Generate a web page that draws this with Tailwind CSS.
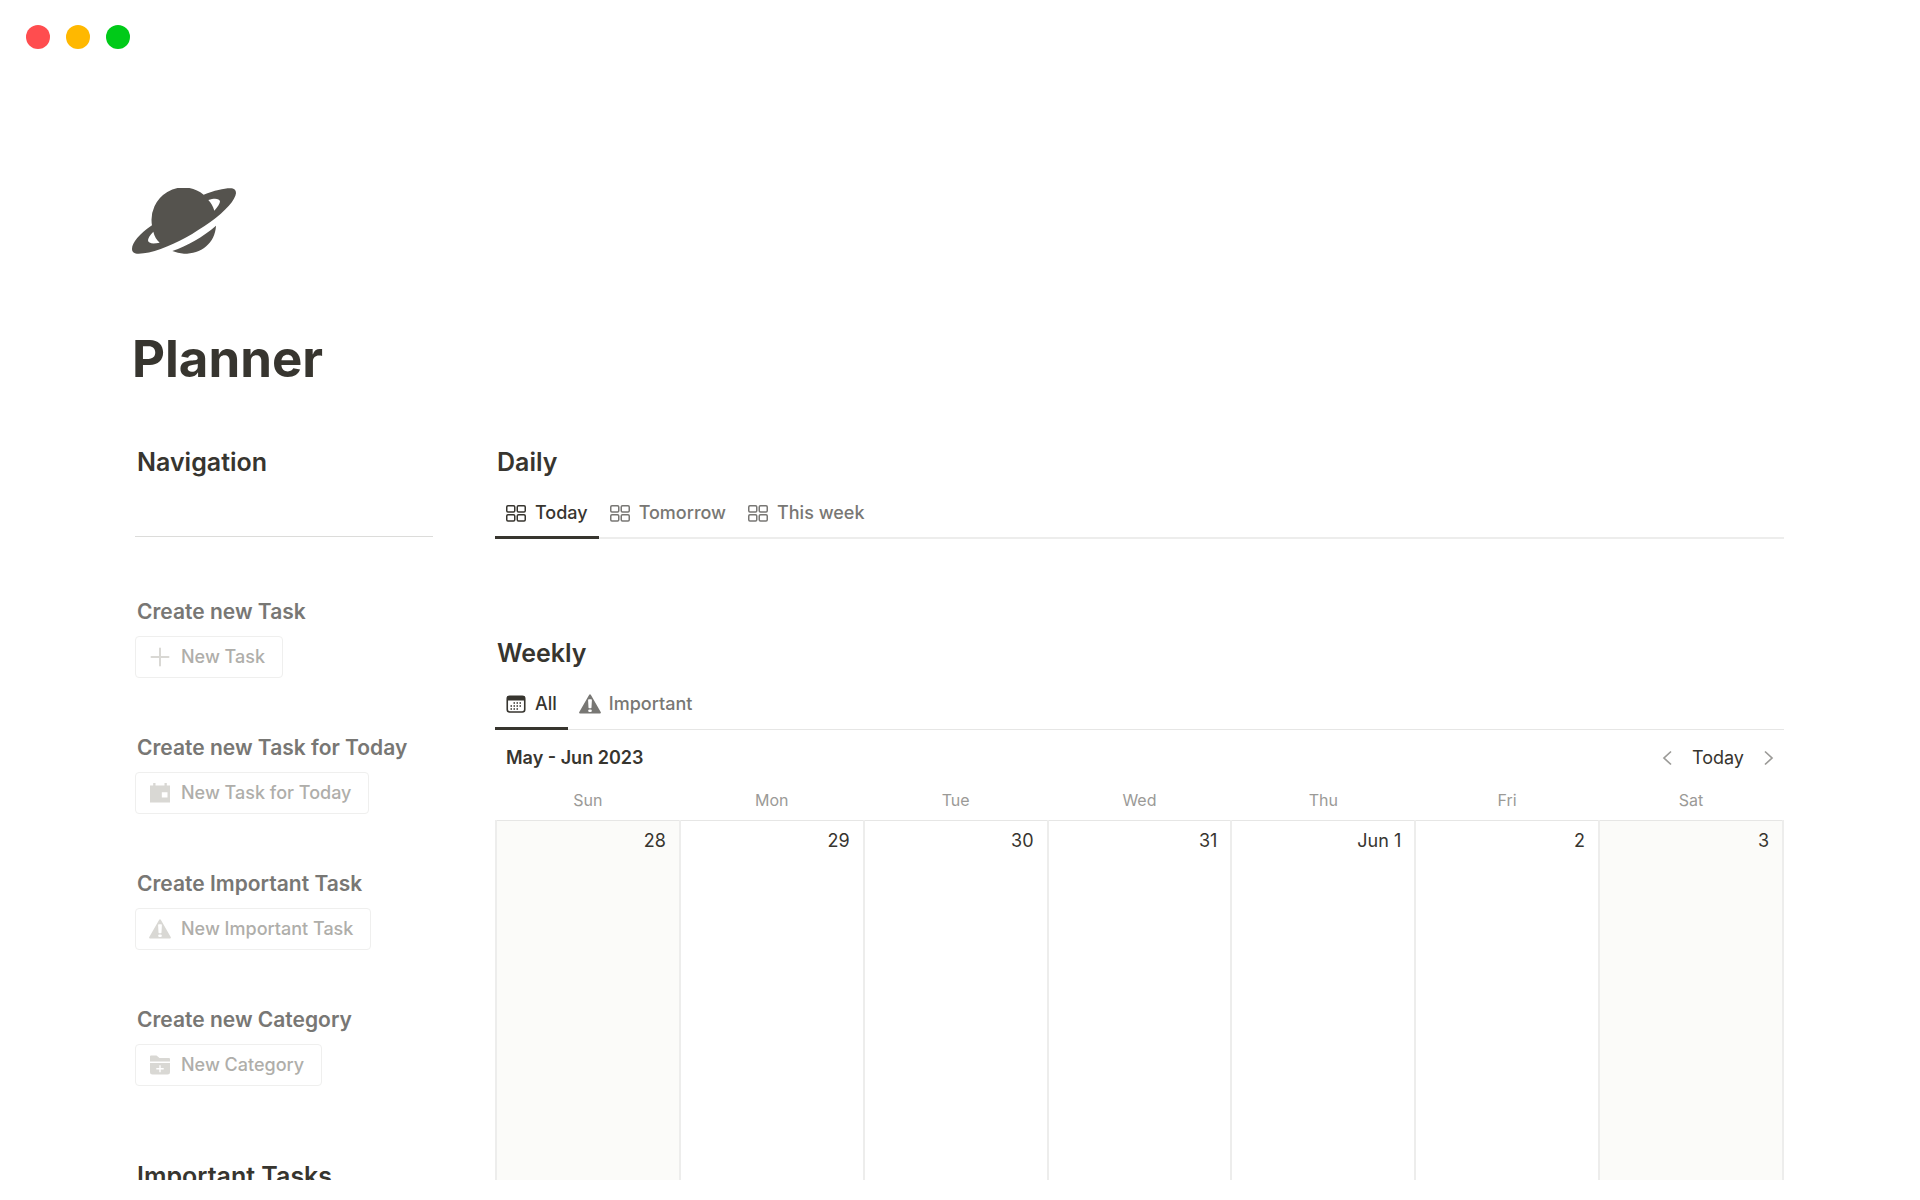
<!DOCTYPE html>
<html lang="en">
<head>
  <meta charset="UTF-8">
  <meta name="viewport" content="width=device-width, initial-scale=1.0">
  <title>Planner</title>
  <script src="https://cdn.jsdelivr.net/npm/@tailwindcss/browser@4"></script>
</head>
<body class="h-screen overflow-hidden flex flex-col pb-5 bg-white font-['Inter',sans-serif] text-[#37352f]">
  <!-- Shared icons -->
  <svg class="hidden" aria-hidden="true">
    <symbol id="gallery" viewBox="0 0 20 17">
      <g fill="none" stroke="currentColor" stroke-width="1.5">
        <rect x=".75" y=".75" width="8" height="6.3" rx="1.2"/>
        <rect x="11.25" y=".75" width="8" height="6.3" rx="1.2"/>
        <rect x=".75" y="9.75" width="8" height="6.3" rx="1.2"/>
        <rect x="11.25" y="9.75" width="8" height="6.3" rx="1.2"/>
      </g>
    </symbol>
    <symbol id="warning" viewBox="0 0 22 20">
      <path fill="currentColor" fill-rule="evenodd" d="M10.2.8q.8-1.3 1.6 0L21.700 18q.7 1.500-.8 1.500H1.100q-1.500 0-.8-1.500zM9.100 6l.4 7.500q0 .7.700.7h1.600q.7 0 .7-.7l.4-7.500q0-.8-.8-.8H9.900q-.8 0-.8.8zM9.200 16.800a1.300 1.200 0 0 0 1.300 1.200h1a1.300 1.200 0 0 0 0-2.500h-1a1.300 1.200 0 0 0-1.300 1.300z"/>
    </symbol>
  </svg>

  <header class="flex gap-4 px-[26px] pt-[25px]">
    <span class="size-6 rounded-full bg-[#ff4d4f]"></span>
    <span class="size-6 rounded-full bg-[#ffb800]"></span>
    <span class="size-6 rounded-full bg-[#00ca18]"></span>
  </header>

  <div class="flex-1 min-h-0 overflow-hidden px-[132px] pt-[139px]">
    <svg class="w-[104px] h-[66px] text-[#55534e]" viewBox="396 566 312 196" fill="currentColor" aria-hidden="true">
      <path fill-rule="evenodd" d="M611 585C642 573 672 566 690 566C703 566 708 571 708 581C706 600 679 633 630 668C584 700 533 731 482 748C458 757 434 762 416 762C402 762 396 757 396 747C397 729 417 704 456 677A96 97 0 0 1 611 585ZM625 601C633 609 639 620 643 633C654 622 660 611 660 605C658 597 645 595 625 601ZM460 696C450 706 444 716 444 722C445 732 459 733 479 729C470 721 463 709 460 696Z"/>
      <path d="M517 754C562 739 608 712 648 678C645 732 603 762 552 762Q533 761 517 754Z"/>
    </svg>

    <h1 class="mt-[73px] text-[51px] leading-16 font-bold">Planner</h1>

    <div class="mt-[55px] flex gap-[62px]">
      <aside class="w-[298px] ml-[3px] shrink-0">
        <h2 class="px-[2px] text-[25px] leading-8 font-semibold">Navigation</h2>
        <hr class="mt-[58px] border-t border-[#dcdcda]">

        <section class="mt-[61px]">
          <h3 class="px-[2px] text-[21px] leading-7 font-semibold text-[#787774]">Create new Task</h3>
          <button class="mt-[10px] h-[42px] pl-[14px] pr-[17px] flex items-center gap-[11px] rounded border border-[#efefee] text-lg font-medium text-[#afaeaa]">
            <svg class="size-5 text-[#d9d8d4]" viewBox="0 0 20 20" fill="none" stroke="currentColor" stroke-width="2" stroke-linecap="round"><path d="M10 1.500v17M1.500 10h17"/></svg>
            New Task
          </button>
        </section>

        <section class="mt-14">
          <h3 class="px-[2px] text-[21px] leading-7 font-semibold text-[#787774]">Create new Task for Today</h3>
          <button class="mt-[10px] h-[42px] pl-[14px] pr-[17px] flex items-center gap-[11px] rounded border border-[#efefee] text-lg font-medium text-[#afaeaa]">
            <svg class="size-5 text-[#d9d8d4]" viewBox="0 0 20 20" fill="currentColor"><path fill-rule="evenodd" d="M3.200 0h2.300v2.500h9V0h2.300v2.500H20v17H0v-17h3.200zM11.800 9.300v5.300h5.700V9.300z"/></svg>
            New Task for Today
          </button>
        </section>

        <section class="mt-14">
          <h3 class="px-[2px] text-[21px] leading-7 font-semibold text-[#787774]">Create Important Task</h3>
          <button class="mt-[10px] h-[42px] pl-[13px] pr-[17px] flex items-center gap-[10px] rounded border border-[#efefee] text-lg font-medium text-[#afaeaa]">
            <svg class="w-[22px] h-5 text-[#d9d8d4]"><use href="#warning"/></svg>
            New Important Task
          </button>
        </section>

        <section class="mt-14">
          <h3 class="px-[2px] text-[21px] leading-7 font-semibold text-[#787774]">Create new Category</h3>
          <button class="mt-[10px] h-[42px] pl-[14px] pr-[17px] flex items-center gap-[11px] rounded border border-[#efefee] text-lg font-medium text-[#afaeaa]">
            <svg class="size-5 text-[#d9d8d4]" viewBox="0 0 20 20" fill="currentColor"><path d="M0 1.500Q0 .5 1 .5h5.500L9.500 3H19q1 0 1 1v2.500H0z"/><path fill-rule="evenodd" d="M0 8h20v9q0 2.500-2.500 2.500h-15Q0 19.500 0 17zM9.300 10.300v2.800H6.300v1.400h3v2.800h1.400v-2.800h3v-1.400h-3v-2.800z"/></svg>
            New Category
          </button>
        </section>

        <h2 class="mt-[74px] px-[2px] text-[25px] leading-8 font-semibold">Important Tasks</h2>
      </aside>

      <main class="flex-1 min-w-0 mr-1">
        <section>
          <h2 class="px-[2px] text-[25px] leading-8 font-semibold">Daily</h2>
          <nav class="mt-[15px] flex border-b-2 border-[#ededec] text-lg leading-6 font-medium text-[#787774]">
            <a href="#" class="flex items-center gap-[9px] px-[11px] pt-2 pb-[11px] -mb-[2px] border-b-3 border-[#37352f] text-[#37352f]"><svg class="w-5 h-[17px]"><use href="#gallery"/></svg>Today</a>
            <a href="#" class="flex items-center gap-[9px] px-[11px] pt-2 pb-[11px] -mb-[2px] border-b-3 border-transparent"><svg class="w-5 h-[17px]"><use href="#gallery"/></svg>Tomorrow</a>
            <a href="#" class="flex items-center gap-[9px] px-[11px] pt-2 pb-[11px] -mb-[2px] border-b-3 border-transparent"><svg class="w-5 h-[17px]"><use href="#gallery"/></svg>This week</a>
          </nav>
        </section>

        <section class="mt-[98px]">
          <h2 class="px-[2px] text-[25px] leading-8 font-semibold">Weekly</h2>
          <nav class="mt-[15px] flex border-b border-[#e6e6e5] text-lg leading-6 font-medium text-[#787774]">
            <a href="#" class="flex items-center gap-[9px] px-[11px] pt-2 pb-[11px] -mb-px border-b-3 border-[#37352f] text-[#37352f]">
              <svg class="w-5 h-[18px]" viewBox="0 0 20 18" fill="none" stroke="currentColor">
                <rect x="1.250" y="1.250" width="17.500" height="15.800" rx="2.500" stroke-width="1.600"/>
                <path d="M1 3.500h18" stroke-width="4"/>
                <path d="M7.500 8h9M4.500 11h12M4.500 14h9" stroke-width="1.500" stroke-dasharray="1.500 1.500"/>
              </svg>All</a>
            <a href="#" class="flex items-center gap-2 px-[11px] pt-2 pb-[11px] -mb-px border-b-3 border-transparent"><svg class="w-[22px] h-5"><use href="#warning"/></svg>Important</a>
          </nav>

          <div class="flex items-center justify-between pt-[14px] pl-[11px] pr-[10px] text-lg leading-7">
            <h3 class="font-semibold">May - Jun 2023</h3>
            <div class="flex items-center gap-5">
              <button aria-label="Previous week"><svg class="w-[10px] h-4 text-[#9b9a97]" viewBox="0 0 10 16" fill="none" stroke="currentColor" stroke-width="1.700"><path d="M9 1.500 2 8l7 6.500"/></svg></button>
              <button>Today</button>
              <button aria-label="Next week"><svg class="w-[10px] h-4 text-[#9b9a97]" viewBox="0 0 10 16" fill="none" stroke="currentColor" stroke-width="1.700"><path d="M1 1.500 8 8l-7 6.500"/></svg></button>
            </div>
          </div>

          <table class="mt-2 w-full table-fixed border-collapse">
            <thead>
              <tr class="h-10 text-base text-[#9b9a97]">
                <th class="font-normal">Sun</th>
                <th class="font-normal">Mon</th>
                <th class="font-normal">Tue</th>
                <th class="font-normal">Wed</th>
                <th class="font-normal">Thu</th>
                <th class="font-normal">Fri</th>
                <th class="font-normal">Sat</th>
              </tr>
            </thead>
            <tbody>
              <tr class="h-[480px] text-right align-top text-lg leading-6">
                <td class="border-x-2 border-t border-[#ededec] border-t-[#e6e6e5] bg-[#fbfbf9] px-[13px] pt-2">28</td>
                <td class="border-x-2 border-t border-[#ededec] border-t-[#e6e6e5] px-[13px] pt-2">29</td>
                <td class="border-x-2 border-t border-[#ededec] border-t-[#e6e6e5] px-[13px] pt-2">30</td>
                <td class="border-x-2 border-t border-[#ededec] border-t-[#e6e6e5] px-[13px] pt-2">31</td>
                <td class="border-x-2 border-t border-[#ededec] border-t-[#e6e6e5] px-[13px] pt-2">Jun 1</td>
                <td class="border-x-2 border-t border-[#ededec] border-t-[#e6e6e5] px-[13px] pt-2">2</td>
                <td class="border-x-2 border-t border-[#ededec] border-t-[#e6e6e5] bg-[#fbfbf9] px-[13px] pt-2">3</td>
              </tr>
            </tbody>
          </table>
        </section>
      </main>
    </div>
  </div>
</body>
</html>
